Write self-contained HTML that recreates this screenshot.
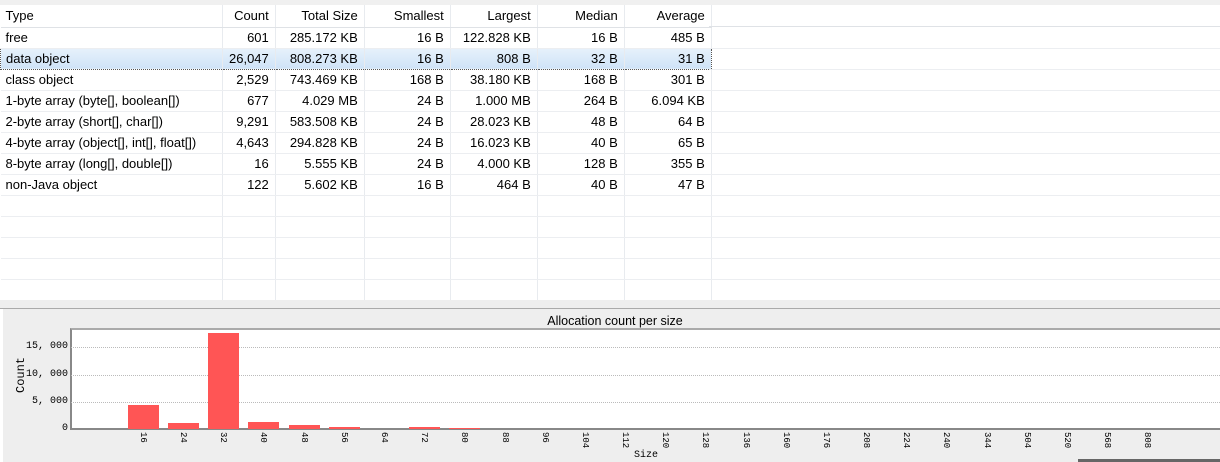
<!DOCTYPE html>
<html><head><meta charset="utf-8"><style>
*{margin:0;padding:0;box-sizing:border-box}
body{width:1220px;height:462px;overflow:hidden;background:#fff;font-family:"Liberation Sans",Arial,sans-serif;font-size:13px;color:#000;position:relative}
.a{position:absolute}
table{position:absolute;left:0;top:5px;border-collapse:collapse;table-layout:fixed}
td{height:21px;border-right:1px solid #e8ebef;border-bottom:1px solid #eceef1;padding:0 6px;text-align:right;white-space:nowrap;line-height:20px;overflow:hidden}
td:first-child{text-align:left;padding-left:5px}
tr.h td{height:22px;border-bottom:1px solid #dfe2e6}
tr.s td{background:linear-gradient(#e6f1fb,#cfe3f7);border-top:1px dotted #555;border-bottom:1px dotted #555}
tr.s td:first-child{border-left:1px dotted #555}
tr.s td:last-child{border-right:1px dotted #555}
.hl{position:absolute;left:709px;width:511px;height:1px;background:#eceef1}
.m{font-family:"Liberation Mono","DejaVu Sans Mono",monospace;font-size:10px;color:#000}
.bar{position:absolute;background:#ff5555;width:31px;bottom:33px}
.tk{position:absolute;top:432px;width:14px;font-family:"Liberation Mono",monospace;font-size:9px;writing-mode:vertical-rl;line-height:14px}
.g{position:absolute;left:71px;right:0;height:0;border-top:1px dotted #bbb}
</style></head><body>
<div class="a" style="left:0;top:0;width:1220px;height:5px;background:#f0f0f0"></div>
<table>
<colgroup><col style="width:222px"><col style="width:51px"><col style="width:89px"><col style="width:86px"><col style="width:87px"><col style="width:87px"><col style="width:87px"></colgroup>
<tr class="h"><td>Type</td><td>Count</td><td>Total Size</td><td>Smallest</td><td>Largest</td><td>Median</td><td>Average</td></tr>
<tr><td>free</td><td>601</td><td>285.172 KB</td><td>16 B</td><td>122.828 KB</td><td>16 B</td><td>485 B</td></tr>
<tr class="s"><td>data object</td><td>26,047</td><td>808.273 KB</td><td>16 B</td><td>808 B</td><td>32 B</td><td>31 B</td></tr>
<tr><td>class object</td><td>2,529</td><td>743.469 KB</td><td>168 B</td><td>38.180 KB</td><td>168 B</td><td>301 B</td></tr>
<tr><td>1-byte array (byte[], boolean[])</td><td>677</td><td>4.029 MB</td><td>24 B</td><td>1.000 MB</td><td>264 B</td><td>6.094 KB</td></tr>
<tr><td>2-byte array (short[], char[])</td><td>9,291</td><td>583.508 KB</td><td>24 B</td><td>28.023 KB</td><td>48 B</td><td>64 B</td></tr>
<tr><td>4-byte array (object[], int[], float[])</td><td>4,643</td><td>294.828 KB</td><td>24 B</td><td>16.023 KB</td><td>40 B</td><td>65 B</td></tr>
<tr><td>8-byte array (long[], double[])</td><td>16</td><td>5.555 KB</td><td>24 B</td><td>4.000 KB</td><td>128 B</td><td>355 B</td></tr>
<tr><td>non-Java object</td><td>122</td><td>5.602 KB</td><td>16 B</td><td>464 B</td><td>40 B</td><td>47 B</td></tr>
<tr><td></td><td></td><td></td><td></td><td></td><td></td><td></td></tr>
<tr><td></td><td></td><td></td><td></td><td></td><td></td><td></td></tr>
<tr><td></td><td></td><td></td><td></td><td></td><td></td><td></td></tr>
<tr><td></td><td></td><td></td><td></td><td></td><td></td><td></td></tr>
<tr><td></td><td></td><td></td><td></td><td></td><td></td><td></td></tr>
</table>
<div class="hl" style="top:26px;background:#dfe2e6"></div>
<div class="hl" style="top:48px"></div><div class="hl" style="top:69px"></div><div class="hl" style="top:90px"></div><div class="hl" style="top:111px"></div><div class="hl" style="top:132px"></div><div class="hl" style="top:153px"></div><div class="hl" style="top:174px"></div><div class="hl" style="top:195px"></div><div class="hl" style="top:216px"></div><div class="hl" style="top:237px"></div><div class="hl" style="top:258px"></div><div class="hl" style="top:279px"></div>
<div class="a" style="left:0;top:300px;width:1220px;height:162px;background:#eeeeee"></div>
<div class="a" style="left:0;top:308px;width:1220px;height:1px;background:#aaa"></div>
<div class="a" style="left:0;top:309px;width:3px;height:153px;background:#fff"></div>
<div class="a" style="left:515px;top:314px;width:200px;text-align:center;font-size:12.5px">Allocation count per size</div>
<div class="a" style="left:70px;top:328px;width:1150px;height:102px;background:#fff;border-top:2px solid #aaa;border-left:2px solid #888;border-bottom:2px solid #888"></div>
<div class="g" style="top:347px"></div><div class="g" style="top:375px"></div><div class="g" style="top:402px"></div>
<div class="a m" style="left:20px;top:341px;width:48px;text-align:right">15, 000</div>
<div class="a m" style="left:20px;top:369px;width:48px;text-align:right">10, 000</div>
<div class="a m" style="left:20px;top:396px;width:48px;text-align:right">5, 000</div>
<div class="a m" style="left:20px;top:423px;width:48px;text-align:right">0</div>
<div class="a" style="left:14px;top:393px;transform:rotate(-90deg);transform-origin:left top;font-family:'Liberation Mono',monospace;font-size:12px">Count</div>
<div class="bar" style="left:128px;height:24px"></div>
<div class="bar" style="left:168px;height:6px"></div>
<div class="bar" style="left:208px;height:96px"></div>
<div class="bar" style="left:248px;height:7px"></div>
<div class="bar" style="left:289px;height:4px"></div>
<div class="bar" style="left:329px;height:2px"></div>
<div class="bar" style="left:409px;height:2px"></div>
<div class="bar" style="left:449px;height:1px"></div>
<div class="tk" style="left:136px">16</div><div class="tk" style="left:176px">24</div><div class="tk" style="left:216px">32</div><div class="tk" style="left:256px">40</div><div class="tk" style="left:297px">48</div><div class="tk" style="left:337px">56</div><div class="tk" style="left:377px">64</div><div class="tk" style="left:417px">72</div><div class="tk" style="left:457px">80</div><div class="tk" style="left:498px">88</div><div class="tk" style="left:538px">96</div><div class="tk" style="left:578px">104</div><div class="tk" style="left:618px">112</div><div class="tk" style="left:658px">120</div><div class="tk" style="left:698px">128</div><div class="tk" style="left:739px">136</div><div class="tk" style="left:779px">160</div><div class="tk" style="left:819px">176</div><div class="tk" style="left:859px">208</div><div class="tk" style="left:899px">224</div><div class="tk" style="left:939px">240</div><div class="tk" style="left:980px">344</div><div class="tk" style="left:1020px">504</div><div class="tk" style="left:1060px">520</div><div class="tk" style="left:1100px">568</div><div class="tk" style="left:1140px">808</div>
<div class="a" style="left:634px;top:450px;font-family:'Liberation Mono',monospace;font-size:10px">Size</div>
<div class="a" style="left:1078px;top:459px;width:142px;height:3px;background:#666"></div>
</body></html>
